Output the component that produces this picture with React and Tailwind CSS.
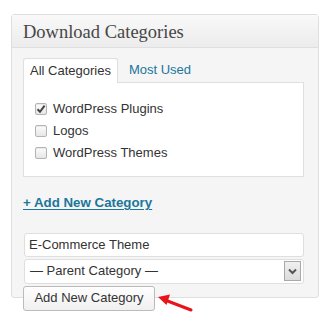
import { useState } from 'react';

const categories = [
  { name: 'WordPress Plugins', checked: true },
  { name: 'Logos', checked: false },
  { name: 'WordPress Themes', checked: false },
];

const CheckBox = ({ checked }) => (
  <span className="flex h-[12px] w-[12px] items-center justify-center rounded-[2px] border border-[#b4b4b4] bg-gradient-to-b from-[#fdfdfd] to-[#e6e6e6] shadow-[inset_0_1px_1px_rgba(0,0,0,0.08)]">
    {checked && (
      <svg width="10" height="10" viewBox="0 0 10 10">
        <path d="M1.5 5.2 L4 7.8 L8.6 1.6" fill="none" stroke="#444" strokeWidth="2" />
      </svg>
    )}
  </span>
);

const App = () => {
  const [tab, setTab] = useState('all');
  const [items, setItems] = useState(categories);
  const [newName, setNewName] = useState('E-Commerce Theme');

  const toggle = (index) => {
    setItems(prev => prev.map((c, i) => (i === index ? { ...c, checked: !c.checked } : c)));
  };

  return (
    <div className="h-[317px] w-[331px] bg-white pl-[11px] pt-[14px] font-['Liberation_Sans',Arial,sans-serif] text-[13px] text-[#333]">
      <div className="h-[284px] w-[308px] rounded-[3px] border border-[#dfdfdf] bg-[#f5f5f5]">
        <div className="flex h-[33px] items-center border-b border-[#dfdfdf] bg-gradient-to-b from-[#f9f9f9] to-[#ececec] pl-[11px] pt-[2px]">
          <h3 className="font-['Liberation_Serif',Georgia,serif] text-[18.5px] leading-none text-[#464646]">
            Download Categories
          </h3>
        </div>

        <div className="pl-[11px] pt-[10px]">
          <div className="flex h-[25px] items-end">
            <button
              type="button"
              onClick={() => setTab('all')}
              className={`relative z-10 flex h-[25px] items-center rounded-t-[3px] px-[6px] pb-[1px] ${tab === 'all' ? 'border border-b-0 border-[#dfdfdf] bg-white text-[#333]' : 'text-[#21759b]'}`}
            >
              All Categories
            </button>
            <button
              type="button"
              onClick={() => setTab('popular')}
              className={`relative z-10 ml-[5px] flex h-[25px] items-center rounded-t-[3px] px-[6px] pb-[1px] ${tab === 'popular' ? 'border border-b-0 border-[#dfdfdf] bg-white text-[#333]' : 'text-[#21759b]'}`}
            >
              Most Used
            </button>
          </div>

          <div className="-mt-px h-[95px] w-[281px] border border-[#dfdfdf] bg-white pl-[11px] pt-[15px]">
            {items.map((c, i) => (
              <label key={c.name} className="flex h-[22px] cursor-pointer items-center" onClick={() => toggle(i)}>
                <CheckBox checked={c.checked} />
                <span className="ml-[6px]">{c.name}</span>
              </label>
            ))}
          </div>

          <a href="#" className="mt-[18px] inline-block text-[13.3px] font-bold leading-[16px] text-[#21759b] underline underline-offset-[2px]">
            + Add New Category
          </a>

          <div className="ml-px mt-[20px] w-[280px]">
            <input
              type="text"
              value={newName}
              onChange={(e) => setNewName(e.target.value)}
              className="block h-[24px] w-full rounded-[3px] border border-[#dfdfdf] bg-white px-[4px] text-[13px] text-[#333] outline-none"
            />
            <div className="mt-[2px] flex h-[25px] items-center justify-between rounded-[3px] border border-[#dfdfdf] bg-white pl-[5px] pr-[2px]">
              <span>— Parent Category —</span>
              <span className="flex h-[20px] w-[17px] items-center justify-center border border-[#a9a9a9] bg-gradient-to-b from-[#f0f0f0] to-[#dcdcdc]">
                <svg width="9" height="7" viewBox="0 0 9 7">
                  <path d="M1 1.5 L4.5 5 L8 1.5" fill="none" stroke="#555" strokeWidth="2" />
                </svg>
              </span>
            </div>
          </div>

          <div className="mt-[2px] flex items-start">
            <button
              type="button"
              className="h-[25px] w-[132px] rounded-[3px] border border-[#bbb] bg-gradient-to-b from-[#fefefe] to-[#f0f0f0] text-[13px] text-[#333]"
            >
              Add New Category
            </button>
            <svg width="38" height="22" viewBox="0 0 38 22" className="ml-[1px] mt-[5px]">
              <path d="M35 19 L9 9" stroke="#e8141b" strokeWidth="3" strokeLinecap="round" />
              <path d="M2 6 L14 3.5 L10.5 14 Z" fill="#e8141b" />
            </svg>
          </div>
        </div>
      </div>
    </div>
  );
};

export default App;
